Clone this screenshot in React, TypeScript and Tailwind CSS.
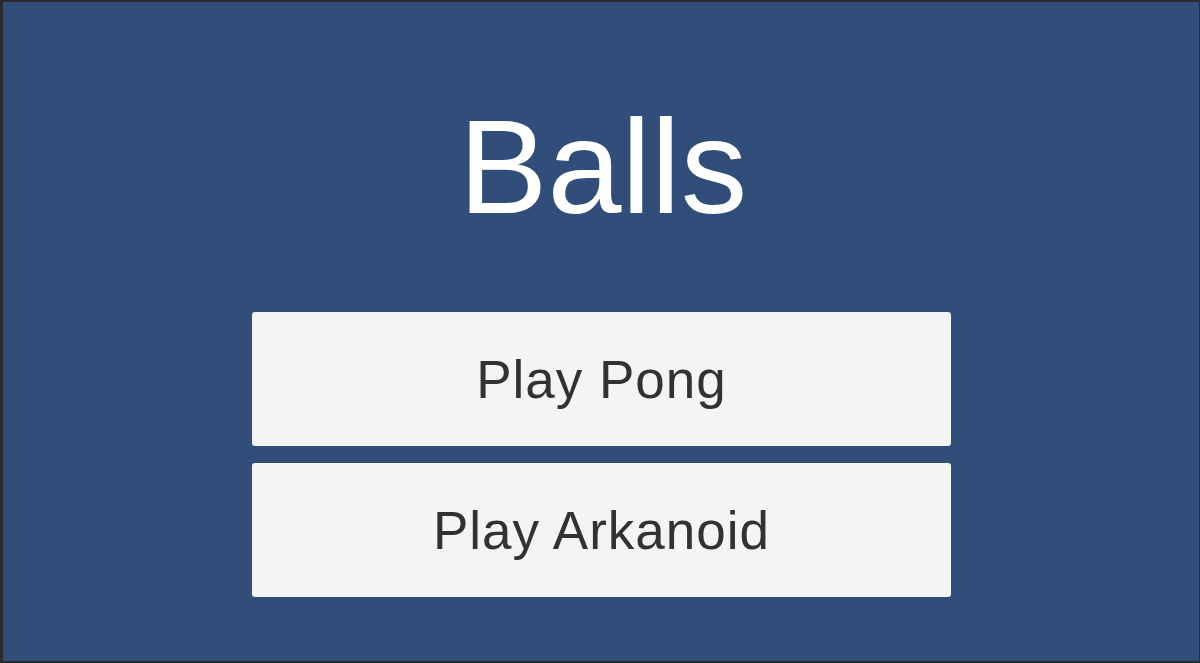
import React from "react";

const MenuButton: React.FC<{ label: string }> = ({ label }) => (
  <button className="flex h-[134px] w-[699px] items-center justify-center rounded-[3px] bg-[#f4f4f4] text-[53px] leading-none tracking-[1px] text-[#323232]">
    {label}
  </button>
);

const App: React.FC = () => {
  return (
    <div
      className="h-[663px] w-[1200px] overflow-hidden border-t-2 border-l-[3px] border-r border-b-2 border-[#2a2a2a] bg-[#314d79]"
      style={{ fontFamily: '"Liberation Sans", Arial, sans-serif' }}
    >
      <div className="flex flex-col items-center">
        {/* Titulo */}
        <h1 className="mt-[99px] pl-[4px] text-[133px] leading-none text-white">Balls</h1>

        {/* Botones */}
        <div className="mt-[78px] flex flex-col gap-[17px] pl-[1px]">
          <MenuButton label="Play Pong" />
          <MenuButton label="Play Arkanoid" />
        </div>
      </div>
    </div>
  );
};

export default App;
